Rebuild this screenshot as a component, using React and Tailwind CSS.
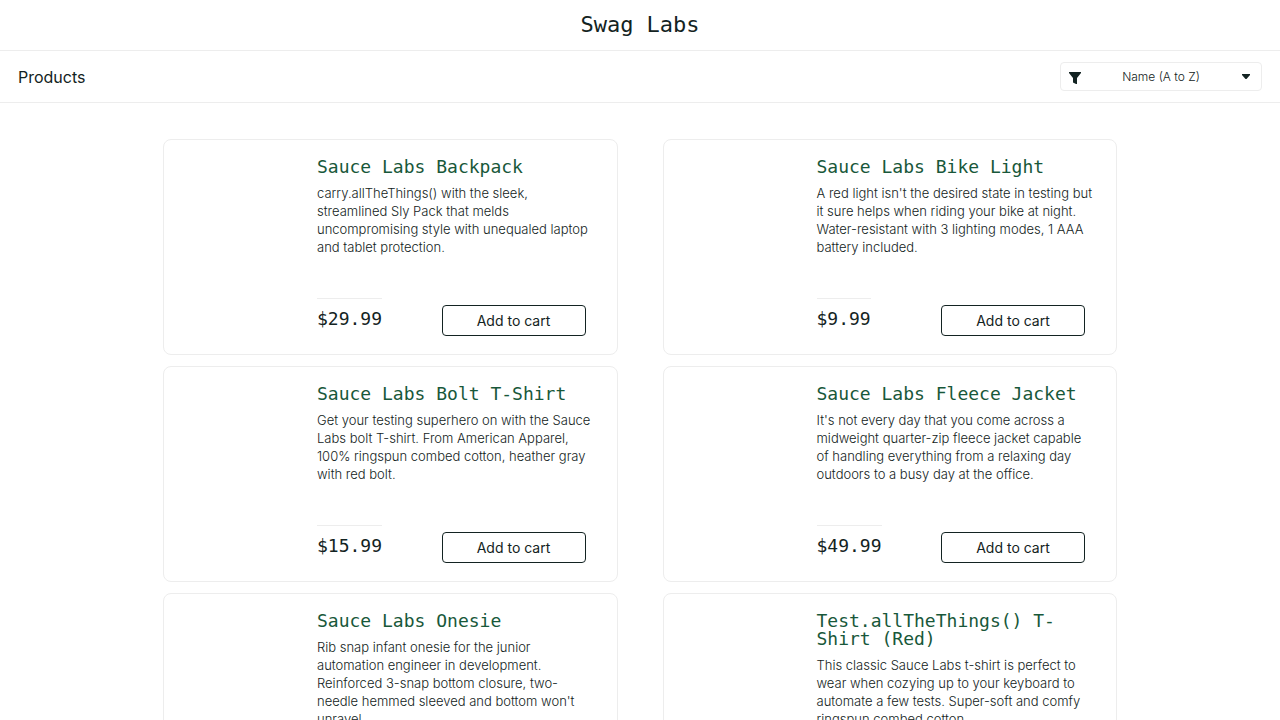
const products = [
  {
    name: "Sauce Labs Backpack",
    price: "$29.99",
    description:
      "carry.allTheThings() with the sleek, streamlined Sly Pack that melds uncompromising style with unequaled laptop and tablet protection.",
  },
  {
    name: "Sauce Labs Bike Light",
    price: "$9.99",
    description:
      "A red light isn't the desired state in testing but it sure helps when riding your bike at night. Water-resistant with 3 lighting modes, 1 AAA battery included.",
  },
  {
    name: "Sauce Labs Bolt T-Shirt",
    price: "$15.99",
    description:
      "Get your testing superhero on with the Sauce Labs bolt T-shirt. From American Apparel, 100% ringspun combed cotton, heather gray with red bolt.",
  },
  {
    name: "Sauce Labs Fleece Jacket",
    price: "$49.99",
    description:
      "It's not every day that you come across a midweight quarter-zip fleece jacket capable of handling everything from a relaxing day outdoors to a busy day at the office.",
  },
  {
    name: "Sauce Labs Onesie",
    price: "$7.99",
    description:
      "Rib snap infant onesie for the junior automation engineer in development. Reinforced 3-snap bottom closure, two-needle hemmed sleeved and bottom won't unravel.",
  },
  {
    name: "Test.allTheThings() T-Shirt (Red)",
    price: "$15.99",
    description:
      "This classic Sauce Labs t-shirt is perfect to wear when cozying up to your keyboard to automate a few tests. Super-soft and comfy ringspun combed cotton.",
  },
];

function ProductCard({ product }) {
  return (
    <li className="flex min-h-[216px] flex-col rounded-lg border border-[#ededed] pt-[18px] pr-[31px] pb-[18px] pl-[153px]">
      <h2 className="font-['DejaVu_Sans_Mono',monospace] text-[18px] leading-[18px] text-[#18583a]">
        <a href="#item">{product.name}</a>
      </h2>
      <p className="mt-2 -mr-[10px] text-[13px] leading-[18px] font-light">{product.description}</p>
      <div className="mt-auto flex items-end justify-between">
        <div className="border-t border-[#ededed] pt-[11px] pb-2 font-['DejaVu_Sans_Mono',monospace] text-[18px] leading-[18px]">
          {product.price}
        </div>
        <button type="button" className="h-[31px] w-36 rounded border border-[#132322] text-[14px] leading-[18px]">
          Add to cart
        </button>
      </div>
    </li>
  );
}

export default function App() {
  return (
    <div className="bg-white font-['Inter',sans-serif] text-[#132322]">
      <header>
        <div className="flex h-[51px] items-center justify-center border-b border-[#ededed] font-['DejaVu_Sans_Mono',monospace] text-[22px] leading-[24px]">
          Swag Labs
        </div>
        <div className="flex h-[52px] items-center justify-between border-b border-[#ededed] px-[18px]">
          <h1 className="text-[16px] leading-[20px]">Products</h1>
          <div className="relative">
            <select
              aria-label="Sort products"
              className="block h-[29px] w-[202px] appearance-none rounded border border-[#ededed] bg-white text-center text-[12px] font-light"
            >
              <option>Name (A to Z)</option>
              <option>Name (Z to A)</option>
              <option>Price (low to high)</option>
              <option>Price (high to low)</option>
            </select>
            <svg className="pointer-events-none absolute top-[10px] left-[9px] h-3 w-3" viewBox="0 0 12 12" fill="#132322" aria-hidden="true">
              <path d="M0 0H12V1L8 6V12H7L4 10.500V6L0 1Z" />
            </svg>
            <svg className="pointer-events-none absolute top-3 right-3 h-[5px] w-2" viewBox="0 0 8 5" fill="#132322" aria-hidden="true">
              <path d="M0 0H8V1L4.500 5H3.500L0 1Z" />
            </svg>
          </div>
        </div>
      </header>
      <main className="px-6 pt-9 pb-6">
        <ul className="mx-auto grid max-w-[954px] grid-cols-2 gap-x-[45px] gap-y-[11px]">
          {products.map((product) => (
            <ProductCard key={product.name} product={product} />
          ))}
        </ul>
      </main>
    </div>
  );
}
